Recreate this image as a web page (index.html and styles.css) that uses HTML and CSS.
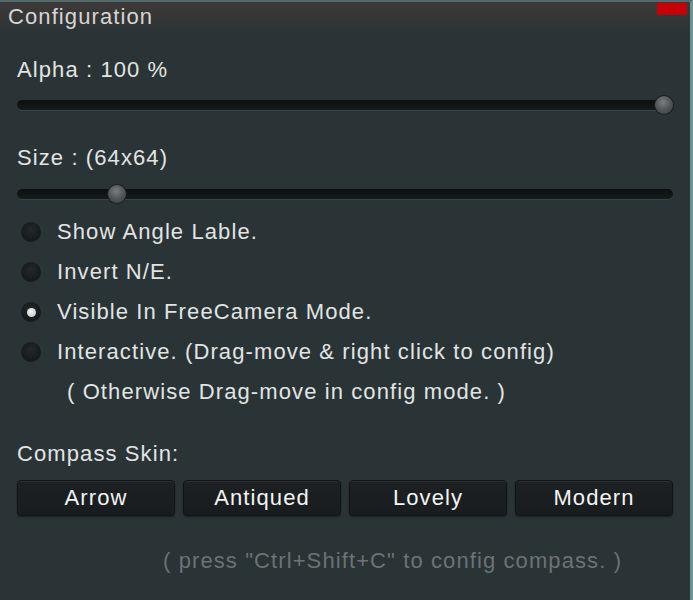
FILE: index.html
```html
<!DOCTYPE html>
<html>
<head>
<meta charset="utf-8">
<link rel="stylesheet" href="styles.css">
</head>
<body>
<div class="panel">
  <div class="titlebar">
    <span class="title">Configuration</span>
    <span class="close"></span>
  </div>
  <div class="content">
    <div class="label first">Alpha : 100 %</div>
    <div class="slider"><div class="track"></div><div class="thumb" style="left: 638px"></div></div>
    <div class="label second">Size : (64x64)</div>
    <div class="slider s2"><div class="track"></div><div class="thumb" style="left: 91px"></div></div>
    <div class="options">
      <div class="opt"><span class="radio"></span><span>Show Angle Lable.</span></div>
      <div class="opt"><span class="radio"></span><span>Invert N/E.</span></div>
      <div class="opt"><span class="radio on"></span><span>Visible In FreeCamera Mode.</span></div>
      <div class="opt"><span class="radio"></span><span>Interactive. (Drag-move &amp; right click to config)</span></div>
      <div class="opt note"><span>( Otherwise Drag-move in config mode. )</span></div>
    </div>
    <div class="label skin">Compass Skin:</div>
    <div class="buttons">
      <div class="btn">Arrow</div>
      <div class="btn">Antiqued</div>
      <div class="btn">Lovely</div>
      <div class="btn">Modern</div>
    </div>
    <div class="hint">( press "Ctrl+Shift+C" to config compass. )</div>
  </div>
</div>
</body>
</html>
```
FILE: styles.css
```css
html, body {
  margin: 0;
  padding: 0;
  background: #2a3336;
}
.panel {
  width: 693px;
  height: 600px;
  box-sizing: border-box;
  background: #2a3336;
  border-top: 2px solid #4f6b6b;
  border-right: 3px solid #6a9494;
  font-family: "Liberation Sans", Arial, sans-serif;
  letter-spacing: 1.1px;
  color: #e2e4e4;
  font-size: 22px;
  overflow: hidden;
}
.titlebar {
  position: relative;
  height: 30px;
  background: linear-gradient(to bottom, #3d3939 0%, #353535 60%, #2c3437 100%);
  display: flex;
  align-items: center;
}
.title {
  padding-left: 8px;
  color: #d6d6d6;
  line-height: 30px;
}
.close {
  position: absolute;
  right: 3px;
  top: 1px;
  width: 30px;
  height: 12px;
  background: #c40008;
}
.content {
  padding: 0 17px 0 17px;
}
.label {
  line-height: 24px;
  height: 24px;
}
.label.first { margin-top: 26px; }
.label.second { margin-top: 36px; }
.slider {
  position: relative;
  margin-top: 18px;
  height: 10px;
}
.slider.s2 { margin-top: 19px; }
.track {
  height: 10px;
  border-radius: 5px;
  background: linear-gradient(to bottom, #0b0f10, #161b1c);
  box-shadow: 0 1px 0 #3a4447;
}
.thumb {
  position: absolute;
  top: -4px;
  width: 18px;
  height: 18px;
  border-radius: 50%;
  background: radial-gradient(circle at 45% 35%, #7a7e80 0%, #55595b 45%, #35393a 100%);
  box-shadow: 0 0 0 1px #1b1f20;
}
.options {
  margin-top: 13px;
}
.opt {
  height: 40px;
  display: flex;
  align-items: center;
  padding-left: 4px;
}
.radio {
  width: 20px;
  height: 20px;
  border-radius: 50%;
  background: radial-gradient(circle at 50% 40%, #23292b 0%, #15191a 70%, #101314 100%);
  margin-right: 16px;
  flex: none;
  display: flex;
  align-items: center;
  justify-content: center;
}
.radio.on::after {
  content: "";
  width: 9px;
  height: 9px;
  border-radius: 50%;
  background: radial-gradient(circle at 45% 40%, #f4f4f4 0%, #bfc2c3 100%);
}
.opt.note {
  padding-left: 50px;
}
.label.skin { margin-top: 30px; }
.buttons {
  margin-top: 14px;
  display: grid;
  grid-template-columns: repeat(4, 1fr);
  gap: 8px;
}
.btn {
  height: 36px;
  box-sizing: border-box;
  border-radius: 4px;
  background: linear-gradient(to bottom, #1d2123, #181c1e);
  border: 1px solid #111516;
  box-shadow: 0 1px 2px rgba(0,0,0,0.4), inset 0 1px 0 #2a2f31;
  display: flex;
  align-items: center;
  justify-content: center;
  color: #f4f4f4;
}
.hint {
  margin-top: 33px;
  padding-left: 146px;
  line-height: 24px;
  color: #6c7275;
}
```
